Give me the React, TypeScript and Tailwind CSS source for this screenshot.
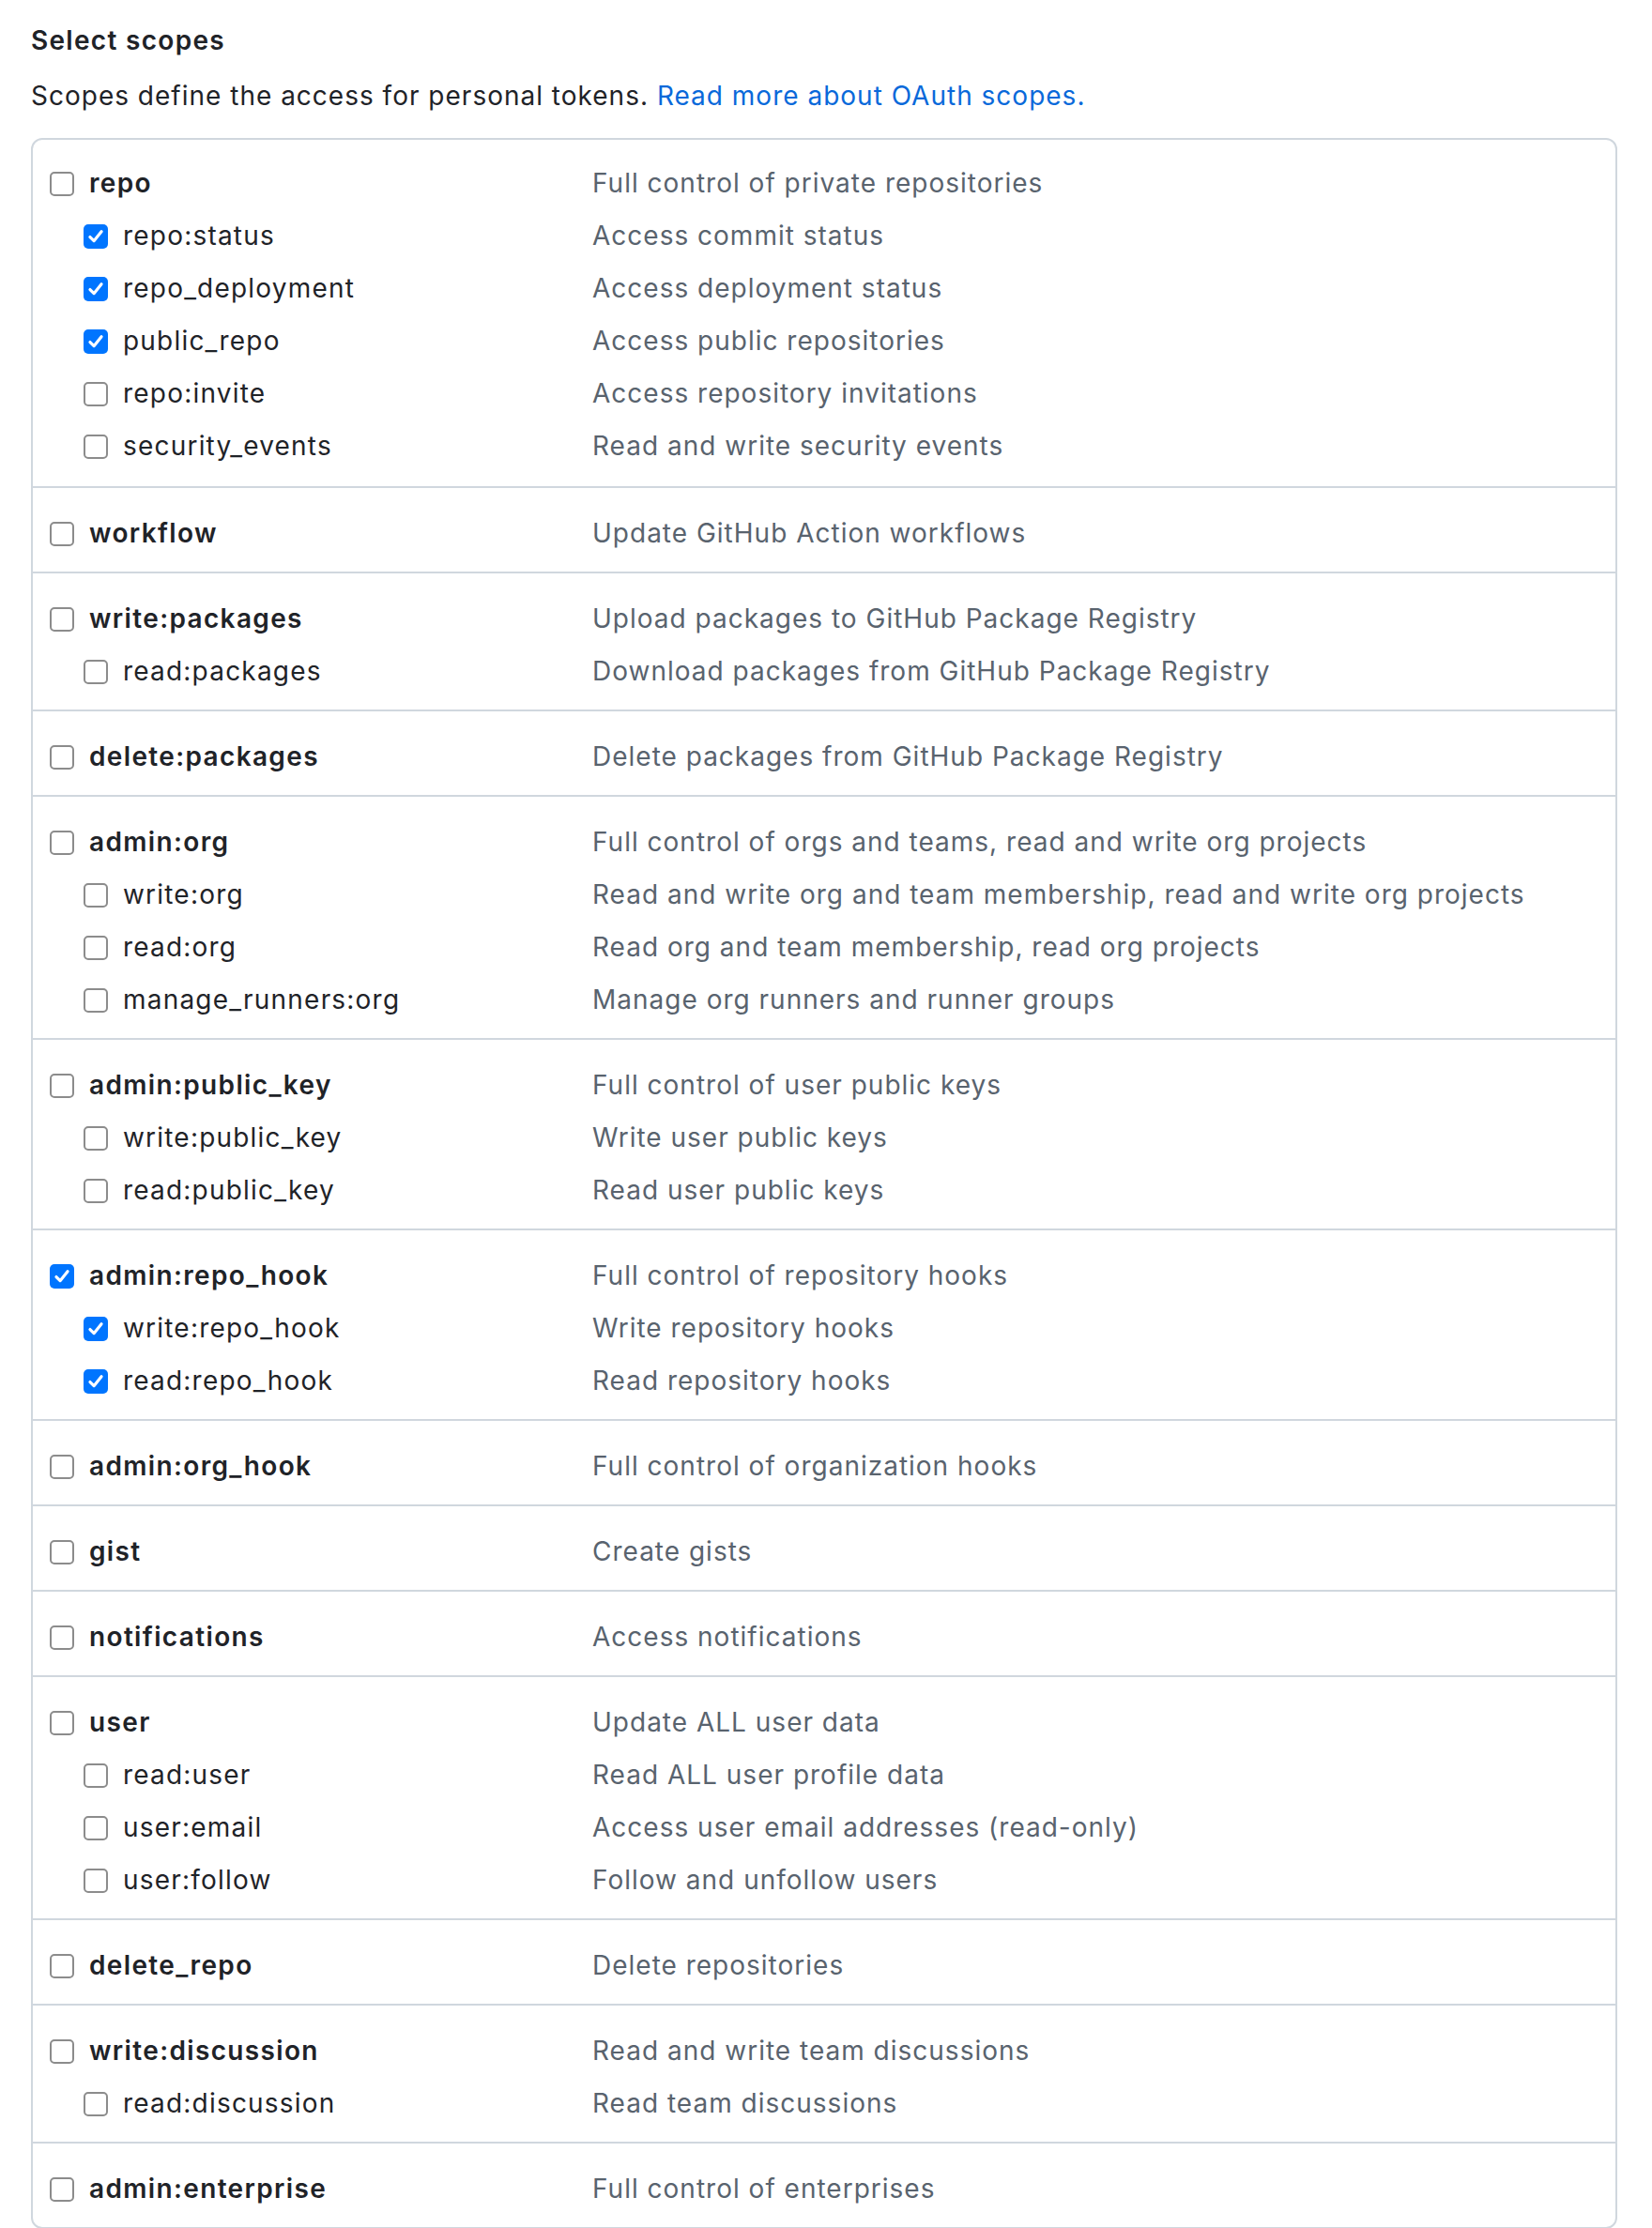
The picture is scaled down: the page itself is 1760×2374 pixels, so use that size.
import React from "react";

type Scope = { name: string; desc: string; checked?: boolean };
type Group = { top: Scope; subs?: Scope[] };

const groups: Group[] = [
  {
    top: { name: "repo", desc: "Full control of private repositories" },
    subs: [
      { name: "repo:status", desc: "Access commit status", checked: true },
      { name: "repo_deployment", desc: "Access deployment status", checked: true },
      { name: "public_repo", desc: "Access public repositories", checked: true },
      { name: "repo:invite", desc: "Access repository invitations" },
      { name: "security_events", desc: "Read and write security events" },
    ],
  },
  { top: { name: "workflow", desc: "Update GitHub Action workflows" } },
  {
    top: { name: "write:packages", desc: "Upload packages to GitHub Package Registry" },
    subs: [{ name: "read:packages", desc: "Download packages from GitHub Package Registry" }],
  },
  { top: { name: "delete:packages", desc: "Delete packages from GitHub Package Registry" } },
  {
    top: { name: "admin:org", desc: "Full control of orgs and teams, read and write org projects" },
    subs: [
      { name: "write:org", desc: "Read and write org and team membership, read and write org projects" },
      { name: "read:org", desc: "Read org and team membership, read org projects" },
      { name: "manage_runners:org", desc: "Manage org runners and runner groups" },
    ],
  },
  {
    top: { name: "admin:public_key", desc: "Full control of user public keys" },
    subs: [
      { name: "write:public_key", desc: "Write user public keys" },
      { name: "read:public_key", desc: "Read user public keys" },
    ],
  },
  {
    top: { name: "admin:repo_hook", desc: "Full control of repository hooks", checked: true },
    subs: [
      { name: "write:repo_hook", desc: "Write repository hooks", checked: true },
      { name: "read:repo_hook", desc: "Read repository hooks", checked: true },
    ],
  },
  { top: { name: "admin:org_hook", desc: "Full control of organization hooks" } },
  { top: { name: "gist", desc: "Create gists" } },
  { top: { name: "notifications", desc: "Access notifications" } },
  {
    top: { name: "user", desc: "Update ALL user data" },
    subs: [
      { name: "read:user", desc: "Read ALL user profile data" },
      { name: "user:email", desc: "Access user email addresses (read-only)" },
      { name: "user:follow", desc: "Follow and unfollow users" },
    ],
  },
  { top: { name: "delete_repo", desc: "Delete repositories" } },
  {
    top: { name: "write:discussion", desc: "Read and write team discussions" },
    subs: [{ name: "read:discussion", desc: "Read team discussions" }],
  },
  { top: { name: "admin:enterprise", desc: "Full control of enterprises" } },
];

function Box({ checked }: { checked?: boolean }) {
  if (checked) {
    return (
      <span className="flex h-[26px] w-[26px] shrink-0 items-center justify-center rounded-[5px] bg-[#0075ff]">
        <svg viewBox="0 0 16 16" className="h-[22px] w-[22px]">
          <path
            d="M3.6 8.4 L6.6 11.4 L12.4 4.2"
            fill="none"
            stroke="white"
            strokeWidth="2.3"
            strokeLinecap="round"
            strokeLinejoin="round"
          />
        </svg>
      </span>
    );
  }
  return <span className="block h-[26px] w-[26px] shrink-0 rounded-[5px] border-2 border-[#8c8c8c] bg-white" />;
}

function Row({ scope, sub }: { scope: Scope; sub?: boolean }) {
  return (
    <div className="flex h-[56px] items-start">
      <div className={`flex w-[596px] shrink-0 items-start ${sub ? "pl-[54px]" : "pl-[18px]"}`}>
        <span className="mt-[16px]">
          <Box checked={scope.checked} />
        </span>
        <span
          className={`ml-[16px] leading-[56px] text-[#1f2328] ${
            sub ? "font-normal tracking-[1.2px]" : "font-semibold tracking-[1.35px]"
          }`}
        >
          {scope.name}
        </span>
      </div>
      <div className="leading-[56px] tracking-[1px] text-[#59636e]">{scope.desc}</div>
    </div>
  );
}

export default function App() {
  return (
    <div className="h-[2374px] overflow-hidden bg-white font-['Inter','Noto_Sans',sans-serif] text-[28px] text-[#1f2328]">
      <div className="px-[33px] pt-[22px]">
        <div className="text-[28px] font-semibold leading-[42px] tracking-[1.3px]">Select scopes</div>
        <p className="mt-[17px] leading-[42px] tracking-[1px]">
          Scopes define the access for personal tokens.{" "}
          <a className="text-[#0969da]">Read more about OAuth scopes.</a>
        </p>
        <div className="mt-[24px] w-[1690px] rounded-[12px] border-2 border-[#d0d7de]">
          {groups.map((g, i) => (
            <div
              key={g.top.name}
              className={i === 0 ? "pt-[18px] pb-[15px]" : "border-t-2 border-[#d0d7de] pt-[20px] pb-[13px]"}
            >
              <Row scope={g.top} />
              {g.subs?.map((s) => (
                <Row key={s.name} scope={s} sub />
              ))}
            </div>
          ))}
        </div>
      </div>
    </div>
  );
}
